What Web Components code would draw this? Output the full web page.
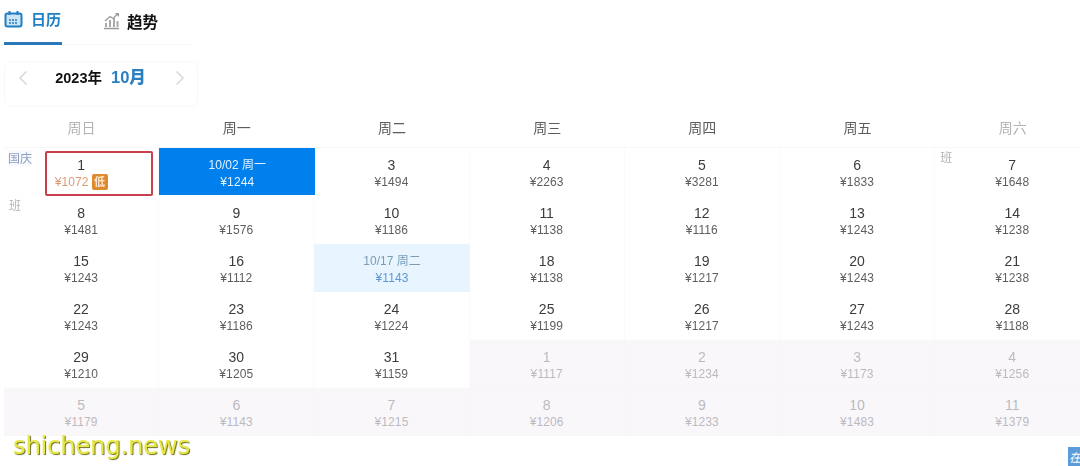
<!DOCTYPE html>
<html lang="zh"><head><meta charset="utf-8">
<style>
html,body{margin:0;height:466px;width:1080px;overflow:hidden;background:#fff}
body{font-family:"Liberation Sans","Noto Sans CJK SC",sans-serif;color:#333;position:relative}
</style></head><body>
<cal-page></cal-page>
<script>
class CalTabs extends HTMLElement{constructor(){super();this.attachShadow({mode:'open'}).innerHTML=`<style>
:host{display:flex;width:188px;height:45px;margin-left:4px;border-bottom:1px solid #f8f8f8;box-sizing:border-box}
.t{display:flex;align-items:center;gap:8px;height:44px;box-sizing:border-box;padding-bottom:3px;font-weight:700;font-size:15px;font-family:"Noto Sans CJK SC",sans-serif}
.a{color:#1f7fc4;width:58px;border-bottom:3px solid #2b78b8;height:45px;padding-bottom:5px;box-sizing:border-box}
.b{color:#111;margin-left:41px;gap:7px}
.b span{font-size:15.5px}
svg{display:block}
</style>
<div class="t a"><svg width="19" height="18" viewBox="0 0 19 18"><rect x="1.5" y="3.5" width="16" height="13" rx="2" fill="#cfe4f3" stroke="#1f7fc4" stroke-width="2"/><path d="M5.5 1v4M13.5 1v4" stroke="#1f7fc4" stroke-width="2"/><path d="M5 10h9M5 13h9" stroke="#1f7fc4" stroke-width="1.4" stroke-dasharray="2 1"/></svg><span>日历</span></div>
<div class="t b"><svg width="17" height="18" viewBox="0 0 17 18"><path d="M1 16.5h15" stroke="#999" stroke-width="1.5"/><path d="M3 15v-4M7 15V8M11 15V6M14.5 15V9" stroke="#aaa" stroke-width="2"/><path d="M2 9 7 4.5l3 2L14.5 2" fill="none" stroke="#999" stroke-width="1.3"/><path d="M12 1h4v4z" fill="#999"/></svg><span>趋势</span></div>`}}
customElements.define('cal-tabs',CalTabs);

class MonthNav extends HTMLElement{constructor(){super();this.attachShadow({mode:'open'}).innerHTML=`<style>
:host{display:flex;align-items:center;box-sizing:border-box;width:194px;height:46px;margin:16px 0 0 4px;border:1px solid #f8f8fa;border-radius:6px;padding:0 12px 12px 13px;justify-content:space-between}
.m{display:flex;align-items:baseline;gap:9px;font-weight:700;font-size:14.5px;color:#111;margin:0 2px 4px 0;font-family:"Liberation Sans","Noto Sans CJK SC",sans-serif}
.m b{font-size:16.5px;color:#2a7fc0}
svg{display:block}
</style>
<svg width="10" height="16" viewBox="0 0 10 16"><path d="M8.5 1.5 2 8l6.5 6.5" fill="none" stroke="#d6d9de" stroke-width="1.6"/></svg>
<div class="m"><span>2023年</span><b>10月</b></div>
<svg width="10" height="16" viewBox="0 0 10 16"><path d="M1.5 1.5 8 8l-6.5 6.5" fill="none" stroke="#d6d9de" stroke-width="1.6"/></svg>`}}
customElements.define('month-nav',MonthNav);

class CalCell extends HTMLElement{constructor(){super();this.attachShadow({mode:'open'}).innerHTML=`<style>
:host{display:flex;flex-direction:column;align-items:center;position:relative;height:48px;box-sizing:border-box;padding-top:8px;border-right:1px solid #fafafa;border-bottom:1px solid #fcfcfc;color:#3c3c3c}
:host([muted]){background:#faf7fb;color:#bcbabf;border-color:#f8f5f9}
:host([sel]){background:#0080ec;color:#e4f2ff;margin:0 -1px 1px 0;height:47px;border:0}
:host([range]){background:#e8f4fe;color:#7a9db8;border:0}
:host([range]) .p{color:#5b98d4}
.d{font-size:14px;line-height:18px}
:host([sel]) .d,:host([range]) .d{font-size:12px}
.p{font-size:12px;line-height:16px;display:flex;align-items:center;gap:3px;color:#5e5e5e;letter-spacing:.1px}
:host([muted]) .p{color:#bcbabf}
:host([sel]) .p{color:#e4f2ff}
:host([low]) .p{color:#dc9a72}
:host([low]) .p i{display:block;font-style:normal;width:16px;height:16px;border-radius:2px;background:#e08a30;color:#fde9d0;font-size:11px;line-height:16px;text-align:center;font-weight:700}
.o{position:absolute;left:41px;right:5px;top:3px;bottom:-1px;border:2px solid #c8404e;border-radius:2px;box-sizing:border-box}
.tag{position:absolute;top:3px;font-size:12px;line-height:16px;color:#a3adbd;font-family:"Noto Sans CJK SC",sans-serif}
.tag.h{left:4px;color:#8e9fc0;top:2px;background:#f7f9fd}
.tag.w{left:5px;top:1px;color:#b3b3b8}
</style><div class="d"></div><div class="p"></div>`}
connectedCallback(){const s=this.shadowRoot,g=n=>this.getAttribute(n);
s.querySelector('.d').textContent=g('d');
s.querySelector('.p').innerHTML='<span>¥'+g('p')+'</span>'+(this.hasAttribute('low')?'<i>低</i>':'');
if(this.hasAttribute('low'))s.appendChild(Object.assign(document.createElement('div'),{className:'o'}));
const t=g('tag');if(t){const e=document.createElement('div');e.className='tag '+(t==='班'?'w':'h');e.textContent=t;s.appendChild(e)}}}
customElements.define('cal-cell',CalCell);

class CalGrid extends HTMLElement{constructor(){super();const R=this.attachShadow({mode:'open'});
const hd=['周日','周一','周二','周三','周四','周五','周六'];
const D=[
[[1,1072],['10/02 周一',1244],[3,1494],[4,2263],[5,3281],[6,1833],[7,1648]],
[[8,1481],[9,1576],[10,1186],[11,1138],[12,1116],[13,1243],[14,1238]],
[[15,1243],[16,1112],['10/17 周二',1143],[18,1138],[19,1217],[20,1243],[21,1238]],
[[22,1243],[23,1186],[24,1224],[25,1199],[26,1217],[27,1243],[28,1188]],
[[29,1210],[30,1205],[31,1159],[1,1117],[2,1234],[3,1173],[4,1256]],
[[5,1179],[6,1143],[7,1215],[8,1206],[9,1233],[10,1483],[11,1379]]];
let h='<style>:host{display:grid;grid-template-columns:repeat(7,155.2px);width:1086.4px;margin:11px 0 0 4px}.h{height:30px;line-height:18px;text-align:center;font-size:14px;color:#5c5c5c;border-bottom:1px solid #f7f7f7;box-sizing:border-box;font-family:"Noto Sans CJK SC",sans-serif}.h.e{color:#b4b4b8}</style>';
hd.forEach((t,i)=>h+=`<div class="h${i%6?'':' e'}">${t}</div>`);
D.forEach((r,y)=>r.forEach((c,x)=>{let a='';
if(y===5||(y===4&&x>2))a+=' muted';
if(y===0&&x===0)a+=' low tag="国庆"';
if(y===1&&x===0)a+=' tag="班"';
if(y===0&&x===6)a+=' tag="班"';
if(y===0&&x===1)a+=' sel';
if(y===2&&x===2)a+=' range';
h+=`<cal-cell d="${c[0]}" p="${c[1]}"${a}></cal-cell>`}));
R.innerHTML=h}}
customElements.define('cal-grid',CalGrid);

class WaterMark extends HTMLElement{constructor(){super();this.attachShadow({mode:'open'}).innerHTML=`<style>
:host{display:block;position:absolute;left:13px;top:430px;font:24.5px/32px "DejaVu Sans",sans-serif;letter-spacing:-.35px;color:#e8e845;text-shadow:1px 1px 1px #6b6b20}
</style>shicheng.news`}}
customElements.define('water-mark',WaterMark);

class CornerBadge extends HTMLElement{constructor(){super();this.attachShadow({mode:'open'}).innerHTML=`<style>
:host{display:block;position:absolute;right:0;top:447px;width:12px;height:19px;overflow:hidden;background:#5a9bd8;color:#fff;font:italic 12px/19px "Noto Sans CJK SC",sans-serif;text-indent:1px}
</style>在`}}
customElements.define('corner-badge',CornerBadge);

class CalPage extends HTMLElement{constructor(){super();this.attachShadow({mode:'open'}).innerHTML=`<style>
:host{display:block;width:1080px;height:466px;overflow:hidden;position:relative}
.w{filter:blur(.45px)}
</style><div class="w"><cal-tabs></cal-tabs><month-nav></month-nav><cal-grid></cal-grid></div><water-mark></water-mark><corner-badge></corner-badge>`}}
customElements.define('cal-page',CalPage);
</script>
</body></html>
